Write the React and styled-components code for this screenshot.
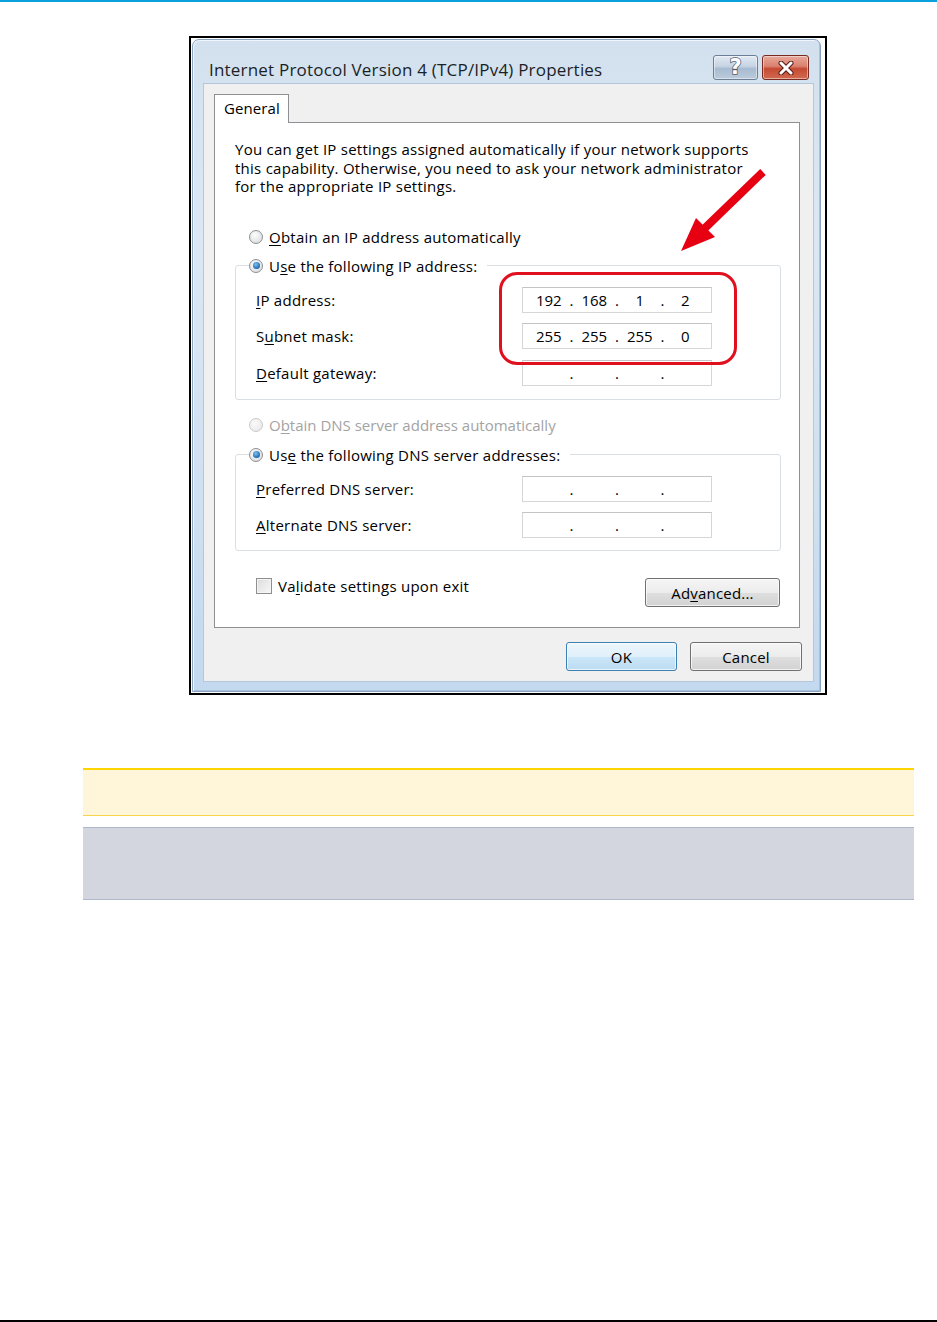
import styled, { createGlobalStyle, css } from "styled-components";

const GlobalStyle = createGlobalStyle`
  html, body {
    margin: 0;
    padding: 0;
    background: #fff;
  }
  body {
    font-family: "Open Sans", "Noto Sans", "Liberation Sans", sans-serif;
    color: #000;
  }
`;

const Page = styled.div`
  min-height: 1322px;
  display: flex;
  flex-direction: column;
`;

const Rule = styled.div`
  height: 2px;
  flex-shrink: 0;
  background: ${(p) => p.$color};
`;

const Figure = styled.div`
  box-sizing: border-box;
  width: 638px;
  height: 659px;
  margin: 34px 0 0 189px;
  border: 2px solid #000;
  padding: 1px 4px 1px 1px;
  background: #fff;
`;

const Window = styled.div`
  box-sizing: border-box;
  height: 100%;
  display: flex;
  flex-direction: column;
  border: 1px solid #8aa3be;
  border-radius: 7px 7px 0 0;
  background: linear-gradient(180deg, #d3e1ef 0%, #dbe7f4 30%, #cfe0f1 70%, #c3d9ef 100%);
  box-shadow: inset 1px 1px 0 #eef5fc, inset -1px -1px 0 #a8c2dc;
`;

const TitleBar = styled.div`
  height: 44px;
  flex-shrink: 0;
  display: flex;
  align-items: flex-start;
  justify-content: space-between;
  padding: 15px 11px 0 16px;
  box-sizing: border-box;
`;

const Title = styled.div`
  font-size: 17px;
  line-height: 22px;
  padding-top: 4px;
  color: #1b1f26;
  letter-spacing: 0.2px;
`;

const Caption = styled.div`
  display: flex;
  gap: 4px;
`;

const CaptionButton = styled.div`
  box-sizing: border-box;
  width: ${(p) => p.$w}px;
  height: 25px;
  border-radius: 3px;
  display: flex;
  align-items: center;
  justify-content: center;
  ${(p) =>
    p.$tone === "close"
      ? css`
          border: 1px solid #7a2a20;
          background: linear-gradient(180deg, #e7a99b 0%, #d9806e 45%, #c54a33 55%, #d16a4f 100%);
        `
      : css`
          border: 1px solid #6d7f96;
          background: linear-gradient(180deg, #e2eaf3 0%, #c5d3e3 45%, #a8bbd1 55%, #bccbdc 100%);
        `}
  box-shadow: inset 0 0 0 1px rgba(255, 255, 255, 0.45);
`;

const HelpGlyph = styled.span`
  font-family: "DejaVu Sans", sans-serif;
  font-size: 21px;
  font-weight: bold;
  line-height: 1;
  color: #fff;
  -webkit-text-stroke: 1.5px #4f5f74;
  paint-order: stroke fill;
`;

const Client = styled.div`
  flex: 1;
  display: flex;
  flex-direction: column;
  margin: 0 7px 10px 11px;
  padding: 10px 13px 10px 10px;
  background: #f0f0f0;
  box-shadow: 0 0 0 1px #b6c7da;
`;

const TabStrip = styled.div`
  display: flex;
  height: 28px;
  position: relative;
  z-index: 1;
`;

const Tab = styled.div`
  box-sizing: border-box;
  width: 75px;
  height: 29px;
  padding-left: 9px;
  border: 1px solid #8d8f93;
  border-bottom: none;
  background: #fff;
  font-size: 15px;
  line-height: 27px;
  letter-spacing: 0.1px;
`;

const Panel = styled.div`
  position: relative;
  box-sizing: border-box;
  height: 506px;
  padding: 17px 18px 0 20px;
  border: 1px solid #8d8f93;
  background: #fff;
  font-size: 15px;
  letter-spacing: 0.25px;
`;

const Intro = styled.p`
  margin: 0;
  line-height: 18.5px;
`;

const Choice = styled.div`
  display: flex;
  align-items: center;
  gap: 6px;
  height: 20px;
  margin: ${(p) => p.$mt}px 0 0 14px;
  color: ${(p) => (p.$disabled ? "#a3a3a3" : "#000")};
  letter-spacing: ${(p) => (p.$disabled ? "0" : "inherit")};
`;

const Radio = styled.span`
  box-sizing: border-box;
  width: 14px;
  height: 14px;
  flex-shrink: 0;
  border-radius: 50%;
  display: flex;
  align-items: center;
  justify-content: center;
  border: 1px solid ${(p) => (p.$disabled ? "#c9c9c9" : "#8c8f94")};
  background: ${(p) =>
    p.$disabled
      ? "radial-gradient(circle at 40% 35%, #fafafa, #e6e6e6)"
      : "radial-gradient(circle at 40% 35%, #fdfdfd, #d4d6d9)"};
  &::after {
    content: "";
    display: ${(p) => (p.$checked ? "block" : "none")};
    width: 7px;
    height: 7px;
    border-radius: 50%;
    background: radial-gradient(circle at 40% 35%, #7cc3f2, #1a62a8 75%);
  }
`;

const Key = styled.u`
  text-decoration-thickness: 1px;
  text-underline-offset: 2px;
`;

const Group = styled.fieldset`
  margin: ${(p) => p.$mt}px 0 0;
  padding: 11px 0 ${(p) => p.$pb}px 20px;
  border: 1px solid #dadfe4;
  border-radius: 3px;
  min-width: 0;
`;

const Legend = styled.legend`
  padding: 0 10px 0 0;
  margin-left: -7px;
  display: flex;
  align-items: center;
  gap: 6px;
  height: 20px;
`;

const FieldRows = styled.div`
  display: grid;
  grid-template-columns: 266px 190px;
  row-gap: 10.5px;
  align-items: center;
`;

const IpField = styled.div`
  box-sizing: border-box;
  width: 190px;
  height: 26px;
  padding: 0 6px;
  display: flex;
  align-items: center;
  border: 1px solid #d6d6d6;
  border-top-color: #c4c4c4;
  background: #fff;
  letter-spacing: 0;
`;

const Octet = styled.span`
  width: 40px;
  text-align: center;
`;

const Dot = styled.span`
  width: 6px;
  text-align: center;
`;

const BottomRow = styled.div`
  display: flex;
  justify-content: space-between;
  align-items: flex-start;
  margin-top: 27px;
  padding: 0 1px 0 21px;
`;

const Check = styled.label`
  display: flex;
  align-items: center;
  gap: 6px;
  height: 16px;
`;

const CheckBox = styled.span`
  box-sizing: border-box;
  width: 16px;
  height: 16px;
  border: 1px solid #8f8f8f;
  background: linear-gradient(135deg, #dcdcdc, #f8f8f8);
  box-shadow: inset 0 0 0 1px #f4f4f4;
`;

const Button = styled.button`
  box-sizing: border-box;
  width: ${(p) => p.$w}px;
  height: 29px;
  padding: 0;
  font-family: inherit;
  font-size: 15px;
  letter-spacing: 0.2px;
  color: #000;
  border-radius: 3px;
  border: 1px solid ${(p) => (p.$default ? "#3c7fb1" : "#707070")};
  background: ${(p) =>
    p.$default
      ? "linear-gradient(180deg, #edf6fc 0%, #e0f0fb 50%, #cbe6f8 51%, #bcdcf3 100%)"
      : "linear-gradient(180deg, #f5f5f5 0%, #ececec 50%, #dfdfdf 51%, #d2d2d2 100%)"};
  box-shadow: inset 0 0 0 1px rgba(255, 255, 255, 0.7);
`;

const Footer = styled.div`
  display: flex;
  justify-content: flex-end;
  gap: 13px;
  margin: 14px -2px 0 0;
`;

const Highlight = styled.div`
  position: absolute;
  left: 284px;
  top: 149px;
  width: 238px;
  height: 93px;
  box-sizing: border-box;
  border: 3px solid #e0101e;
  border-radius: 18px;
  pointer-events: none;
`;

const Pointer = styled.svg`
  position: absolute;
  left: 460px;
  top: 42px;
  pointer-events: none;
`;

const Callout = styled.div`
  box-sizing: border-box;
  margin: ${(p) => p.$mt}px 23px 0 83px;
  height: ${(p) => p.$h}px;
  ${(p) =>
    p.$tone === "note"
      ? css`
          background: #fff6da;
          border-top: 2px solid #ffd400;
          border-bottom: 1px solid #f7d54a;
        `
      : css`
          background: #d3d6df;
          border-top: 1px solid #adb8ca;
          border-bottom: 1px solid #adb8ca;
        `}
`;

const Spacer = styled.div`
  flex: 1;
`;

const IpValue = ({ parts = ["", "", "", ""] }) => (
  <IpField>
    <Octet>{parts[0]}</Octet>
    <Dot>.</Dot>
    <Octet>{parts[1]}</Octet>
    <Dot>.</Dot>
    <Octet>{parts[2]}</Octet>
    <Dot>.</Dot>
    <Octet>{parts[3]}</Octet>
  </IpField>
);

const App = () => {
  return (
    <Page>
      <GlobalStyle />
      <Rule $color="#0aa0dc" />
      <Figure>
        <Window>
          <TitleBar>
            <Title>Internet Protocol Version 4 (TCP/IPv4) Properties</Title>
            <Caption>
              <CaptionButton $w={45}>
                <HelpGlyph>?</HelpGlyph>
              </CaptionButton>
              <CaptionButton $w={47} $tone="close">
                <svg width="18" height="14" viewBox="0 0 18 14">
                  <path d="M4 2 L14 12 M14 2 L4 12" stroke="#5a1a12" strokeWidth="5" strokeLinecap="round" />
                  <path d="M4 2 L14 12 M14 2 L4 12" stroke="#fff" strokeWidth="3" strokeLinecap="round" />
                </svg>
              </CaptionButton>
            </Caption>
          </TitleBar>
          <Client>
            <TabStrip>
              <Tab>General</Tab>
            </TabStrip>
            <Panel>
              <Intro>
                You can get IP settings assigned automatically if your network supports
                <br />
                this capability. Otherwise, you need to ask your network administrator
                <br />
                for the appropriate IP settings.
              </Intro>

              <Choice $mt={31}>
                <Radio />
                <span>
                  <Key>O</Key>btain an IP address automatically
                </span>
              </Choice>

              <Group $mt={9} $pb={13}>
                <Legend>
                  <Radio $checked />
                  <span>
                    U<Key>s</Key>e the following IP address:
                  </span>
                </Legend>
                <FieldRows>
                  <span>
                    <Key>I</Key>P address:
                  </span>
                  <IpValue parts={["192", "168", "1", "2"]} />
                  <span>
                    S<Key>u</Key>bnet mask:
                  </span>
                  <IpValue parts={["255", "255", "255", "0"]} />
                  <span>
                    <Key>D</Key>efault gateway:
                  </span>
                  <IpValue />
                </FieldRows>
              </Group>

              <Choice $mt={15} $disabled>
                <Radio $disabled />
                <span>
                  O<Key>b</Key>tain DNS server address automatically
                </span>
              </Choice>

              <Group $mt={10} $pb={12}>
                <Legend>
                  <Radio $checked />
                  <span>
                    Us<Key>e</Key> the following DNS server addresses:
                  </span>
                </Legend>
                <FieldRows>
                  <span>
                    <Key>P</Key>referred DNS server:
                  </span>
                  <IpValue />
                  <span>
                    <Key>A</Key>lternate DNS server:
                  </span>
                  <IpValue />
                </FieldRows>
              </Group>

              <BottomRow>
                <Check>
                  <CheckBox />
                  <span>
                    Va<Key>l</Key>idate settings upon exit
                  </span>
                </Check>
                <Button $w={135}>
                  Ad<Key>v</Key>anced...
                </Button>
              </BottomRow>

              <Highlight />
              <Pointer width="95" height="90" viewBox="0 0 95 90">
                <path d="M30 63 L88 7" stroke="#e60012" strokeWidth="8" />
                <polygon points="6,86 40,72 21,53" fill="#e60012" />
              </Pointer>
            </Panel>
            <Footer>
              <Button $w={111} $default>
                OK
              </Button>
              <Button $w={112}>Cancel</Button>
            </Footer>
          </Client>
        </Window>
      </Figure>

      <Callout $tone="note" $mt={73} $h={48} />
      <Callout $tone="info" $mt={11} $h={73} />

      <Spacer />
      <Rule $color="#000" />
    </Page>
  );
};

export default App;
